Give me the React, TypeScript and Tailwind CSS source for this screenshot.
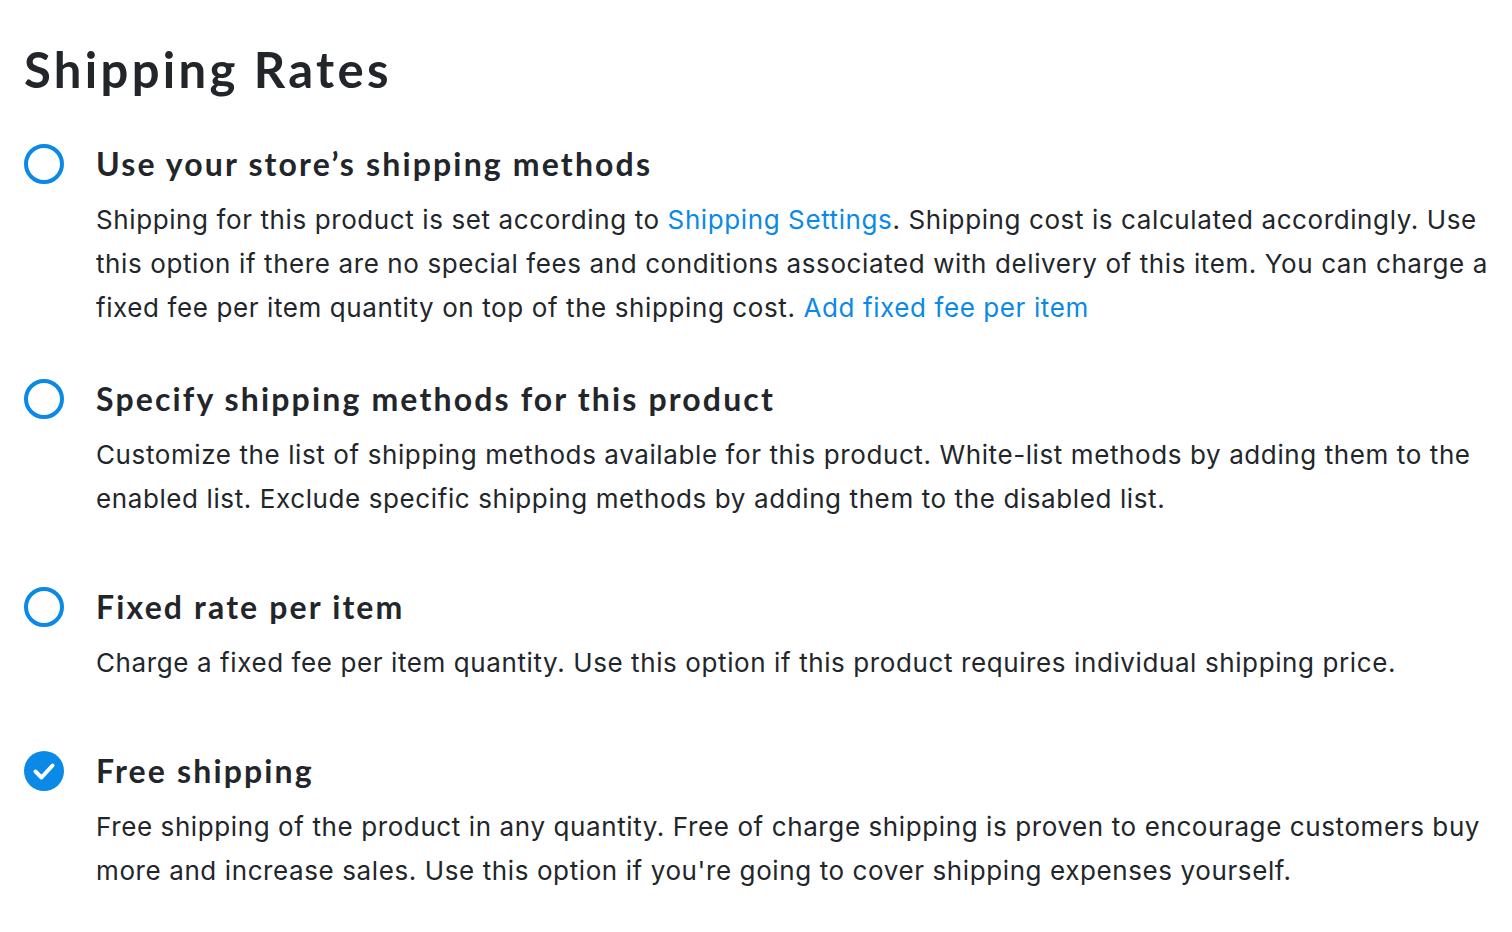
import React from "react";

interface Option {
  id: string;
  title: string;
  body: React.ReactNode;
  checked?: boolean;
  gap: string;
}

const link = "text-[#0a8ae6]";

const options: Option[] = [
  {
    id: "store",
    title: "Use your store’s shipping methods",
    body: (
      <>
        Shipping for this product is set according to{" "}
        <a className={link}>Shipping Settings</a>. Shipping cost is calculated
        accordingly. Use this option if there are no special fees and conditions
        associated with delivery of this item. You can charge a fixed fee per
        item quantity on top of the shipping cost.{" "}
        <a className={link}>Add fixed fee per item</a>
      </>
    ),
    gap: "mb-[46px]",
  },
  {
    id: "custom",
    title: "Specify shipping methods for this product",
    body: (
      <>
        Customize the list of shipping methods available for this product.
        White-list methods by adding them to the enabled list. Exclude specific
        shipping methods by adding them to the disabled list.
      </>
    ),
    gap: "mb-[63px]",
  },
  {
    id: "fixed",
    title: "Fixed rate per item",
    body: (
      <>
        Charge a fixed fee per item quantity. Use this option if this product
        requires individual shipping price.
      </>
    ),
    gap: "mb-[63px]",
  },
  {
    id: "free",
    title: "Free shipping",
    body: (
      <>
        Free shipping of the product in any quantity. Free of charge shipping is
        proven to encourage customers buy more and increase sales. Use this
        option if you're going to cover shipping expenses yourself.
      </>
    ),
    checked: true,
    gap: "",
  },
];

function Radio({ checked }: { checked?: boolean }) {
  if (checked) {
    return (
      <svg width="40" height="40" viewBox="0 0 40 40">
        <circle cx="20" cy="20" r="20" fill="#0a8ae6" />
        <path
          d="M11.5 20.5l6 6 11-12"
          fill="none"
          stroke="#fff"
          strokeWidth="4"
          strokeLinecap="round"
          strokeLinejoin="round"
        />
      </svg>
    );
  }
  return (
    <svg width="40" height="40" viewBox="0 0 40 40">
      <circle cx="20" cy="20" r="18" fill="none" stroke="#0a8ae6" strokeWidth="4" />
    </svg>
  );
}

export default function App() {
  return (
    <div className="min-h-screen bg-white pl-[24px] pt-[37px] text-[#22262b]">
      <h1 className="mb-[40px] font-['Lato',sans-serif] text-[49px] font-bold leading-[64px] tracking-[3.3px]">
        Shipping Rates
      </h1>
      <div className="flex flex-col">
        {options.map((o) => (
          <div key={o.id} className={`flex ${o.gap}`}>
            <div className="w-[72px] shrink-0 pt-[3px]">
              <Radio checked={o.checked} />
            </div>
            <div className="w-[1396px]">
              <div className="mb-[11px] font-['Lato',sans-serif] text-[32px] font-bold leading-[46px] tracking-[2.15px]">
                {o.title}
              </div>
              <p className="font-['Inter',sans-serif] text-[26px] leading-[44px] tracking-[0.6px]">
                {o.body}
              </p>
            </div>
          </div>
        ))}
      </div>
    </div>
  );
}
